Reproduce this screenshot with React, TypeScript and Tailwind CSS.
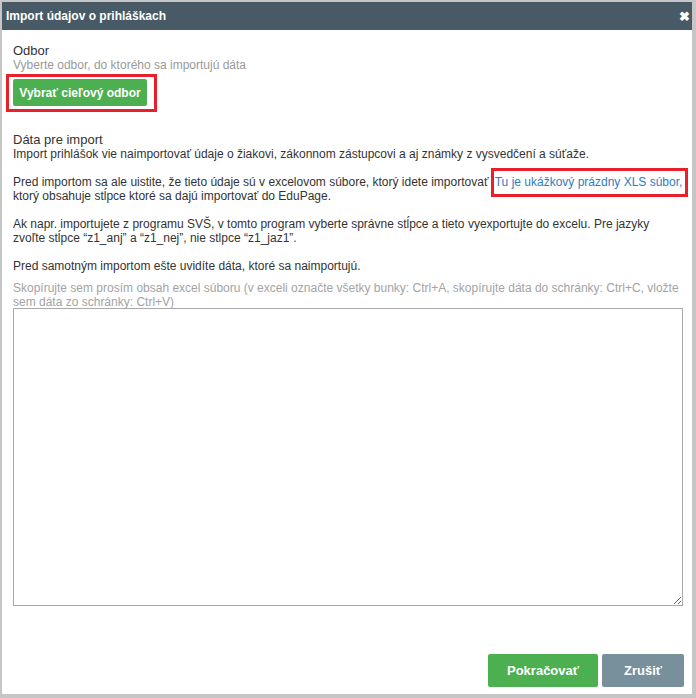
import { useState } from "react";

export default function App() {
  const [data, setData] = useState("");

  return (
    <div className="w-[696px] h-[698px] bg-white border-2 border-r-[4px] border-b-[4px] border-[#c6c6c6] flex flex-col font-['Liberation_Sans',Arial,sans-serif] text-[#333]">
      <div className="h-[28px] bg-[#475a66] flex items-center justify-between pl-[4px] pr-[2px] shrink-0">
        <span className="text-white font-bold text-[12px]">Import údajov o prihláškach</span>
        <span className="text-white font-bold text-[13px] leading-none">✖</span>
      </div>

      <div className="flex-1 flex flex-col pl-[11px] pr-[8px] pt-[13px]">
        <div className="text-[13px] leading-[15px]">Odbor</div>
        <div className="text-[12px] leading-[14px] text-[#9a9a9a]">Vyberte odbor, do ktorého sa importujú dáta</div>

        <div className="mt-[2px] -ml-[7px] w-fit border-[3px] border-[#e8202a] pl-[4px] pr-[7px] pt-[2px] pb-[3px]">
          <button className="h-[27px] w-[134px] bg-[#4caf50] rounded-[2px] text-white font-bold text-[12px]">
            Vybrať cieľový odbor
          </button>
        </div>

        <div className="mt-[20px] text-[13px] leading-[15px]">Dáta pre import</div>
        <div className="text-[12px] leading-[14px]">
          Import prihlášok vie naimportovať údaje o žiakovi, zákonnom zástupcovi a aj známky z vysvedčení a súťaže.
          <br />
          <br />
          Pred importom sa ale uistite, že tieto údaje sú v excelovom súbore, ktorý idete importovať{" "}
          <span className="relative ml-[3px]">
            <a href="#" className="text-[#2f7dbf]">Tu je ukážkový prázdny XLS súbor,</a>
            <span className="absolute -left-[4px] -right-[6px] -top-[7px] -bottom-[8px] border-[3px] border-[#e8202a] pointer-events-none" />
          </span>
          <br />
          ktorý obsahuje stĺpce ktoré sa dajú importovať do EduPage.
          <br />
          <br />
          Ak napr. importujete z programu SVŠ, v tomto program vyberte správne stĺpce a tieto vyexportujte do excelu. Pre jazyky
          <br />
          zvoľte stĺpce “z1_anj” a “z1_nej”, nie stlpce “z1_jaz1”.
          <br />
          <br />
          Pred samotným importom ešte uvidíte dáta, ktoré sa naimportujú.
        </div>

        <div className="mt-[8px] text-[12px] leading-[14px] text-[#a3a3a3]">
          Skopírujte sem prosím obsah excel súboru (v exceli označte všetky bunky: Ctrl+A, skopírujte dáta do schránky: Ctrl+C, vložte
          <br />
          sem dáta zo schránky: Ctrl+V)
        </div>

        <textarea
          value={data}
          onChange={(e) => setData(e.target.value)}
          className="mt-[-1px] w-[670px] h-[298px] border border-[#a9a9a9] outline-none p-1 text-[12px]"
        />

        <div className="mt-auto mb-[7px] flex justify-end gap-[4px]">
          <button className="h-[33px] w-[110px] bg-[#4caf50] rounded-[2px] text-white font-bold text-[13px]">
            Pokračovať
          </button>
          <button className="h-[33px] w-[82px] bg-[#78909c] rounded-[2px] text-white font-bold text-[13px]">
            Zrušiť
          </button>
        </div>
      </div>
    </div>
  );
}
